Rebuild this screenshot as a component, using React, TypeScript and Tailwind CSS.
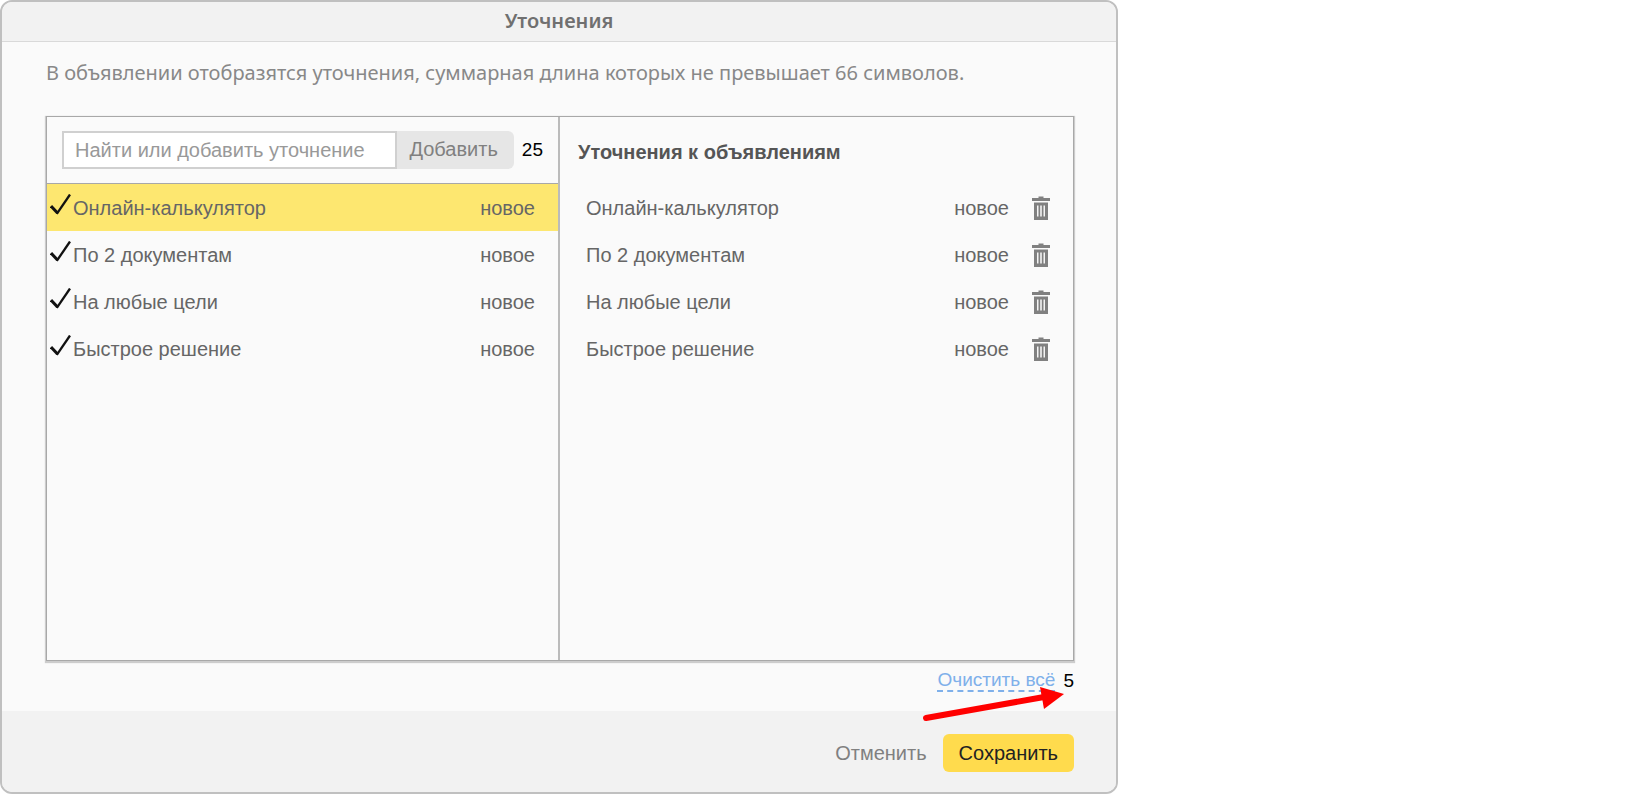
import { useState } from 'react';

type Callout = {
  id: number;
  text: string;
  status: string;
};

const callouts: Callout[] = [
  { id: 1, text: 'Онлайн-калькулятор', status: 'новое' },
  { id: 2, text: 'По 2 документам', status: 'новое' },
  { id: 3, text: 'На любые цели', status: 'новое' },
  { id: 4, text: 'Быстрое решение', status: 'новое' },
];

const CheckIcon = () => (
  <svg width="23" height="24" viewBox="0 0 23 24" fill="none" stroke="#111" aria-hidden="true">
    <path d="M1 12L7.5 19" strokeWidth="3" />
    <path d="M6.8 19.8L20 0.5" strokeWidth="2.3" />
  </svg>
);

const TrashIcon = () => (
  <svg width="18" height="24" viewBox="0 0 18 24" fill="#808080" aria-hidden="true">
    <path d="M6.5 0.5h5V2H18v3H0V2h6.5z" />
    <path d="M2 6.5h14V24H2z" />
    <path d="M5 9.5h1.5v11H5zM8.2 9.5h1.6v11H8.2zM11.5 9.5H13v11h-1.5z" fill="#f4f4f4" />
  </svg>
);

const ArrowIcon = () => (
  <svg width="144" height="36" viewBox="0 0 144 36" aria-hidden="true">
    <path d="M4 31L122 10" stroke="#ff0000" strokeWidth="6" strokeLinecap="round" />
    <path d="M118 0L142 7L122 22z" fill="#ff0000" />
  </svg>
);

const App = () => {
  const [selected, setSelected] = useState(callouts);
  const [activeId, setActiveId] = useState(1);
  const [query, setQuery] = useState('');

  const removeCallout = (id: number) => setSelected(selected.filter((item) => item.id !== id));

  return (
    <main className="w-full max-w-[1118px] overflow-hidden rounded-xl border-2 border-[#c0c0c0] bg-[#fafafa] font-['Liberation_Sans',Arial,sans-serif] text-xl text-[#666]">
      <header className="flex h-10 items-center justify-center border-b border-[#d9d9d9] bg-[#f2f2f2] pb-0.5">
        <h1 className="font-['Noto_Sans',sans-serif] text-xl font-semibold text-[#707070]">Уточнения</h1>
      </header>

      <section className="pr-[42px] pl-11">
        <p className="flex h-[74px] items-center pb-3 font-['Noto_Sans',sans-serif] text-xl text-[#888]">
          В объявлении отобразятся уточнения, суммарная длина которых не превышает 66 символов.
        </p>

        <div className="grid min-h-[545px] grid-cols-2 border border-[#a8a8a8] shadow-[0_1px_1px_1px_#ccc]">
          <div className="border-r-2 border-[#bbb]">
            <div className="flex h-[67px] items-center border-b border-[#a8a8a8] px-[15px]">
              <input
                type="text"
                aria-label="Найти или добавить уточнение"
                placeholder="Найти или добавить уточнение"
                value={query}
                onChange={(e) => setQuery(e.target.value)}
                className="h-[38px] min-w-0 flex-1 border-2 border-[#d0d0d0] bg-white px-[11px] placeholder:text-[#999]"
              />
              <button type="button" className="h-[38px] rounded-r-md bg-[#e6e6e6] pr-4 pb-0.5 pl-3 text-[#808080]">
                Добавить
              </button>
              <span className="pl-2 text-[19px] text-black">25</span>
            </div>
            <ul>
              {callouts.map((item) => (
                <li key={item.id} className={item.id === activeId ? 'bg-[#fde770]' : ''}>
                  <button
                    type="button"
                    onClick={() => setActiveId(item.id)}
                    className="flex h-[47px] w-full items-center pr-[23px] pl-[3px] text-left">
                    <span className="pb-1">
                      <CheckIcon />
                    </span>
                    <span className="flex-1">{item.text}</span>
                    <span>{item.status}</span>
                  </button>
                </li>
              ))}
            </ul>
          </div>

          <div>
            <h2 className="flex h-[67px] items-center px-[18px] pt-0.5 font-bold text-[#555]">
              Уточнения к объявлениям
            </h2>
            <ul>
              {selected.map((item) => (
                <li key={item.id} className="flex h-[47px] items-center pr-[23px] pl-[26px]">
                  <span className="flex-1">{item.text}</span>
                  <span>{item.status}</span>
                  <button
                    type="button"
                    aria-label={`Удалить ${item.text}`}
                    onClick={() => removeCallout(item.id)}
                    className="pl-[23px]">
                    <TrashIcon />
                  </button>
                </li>
              ))}
            </ul>
          </div>
        </div>

        <div className="relative flex h-[50px] items-center justify-end gap-2 pb-[10px]">
          <button
            type="button"
            onClick={() => setSelected([])}
            className="border-b-2 border-dashed border-[#7fb0ea] text-[19px] leading-5 text-[#7fb0ea]">
            Очистить всё
          </button>
          <span className="text-[19px] text-black">5</span>
          <div className="pointer-events-none absolute top-[26px] right-2">
            <ArrowIcon />
          </div>
        </div>
      </section>

      <footer className="flex h-[81px] items-center justify-end gap-4 bg-[#f2f2f2] pt-[3px] pr-[42px] pl-11">
        <button type="button" className="text-[#808080]">
          Отменить
        </button>
        <button type="button" className="h-[38px] rounded-md bg-[#ffdb4d] px-4 text-[#222]">
          Сохранить
        </button>
      </footer>
    </main>
  );
};

export default App;
